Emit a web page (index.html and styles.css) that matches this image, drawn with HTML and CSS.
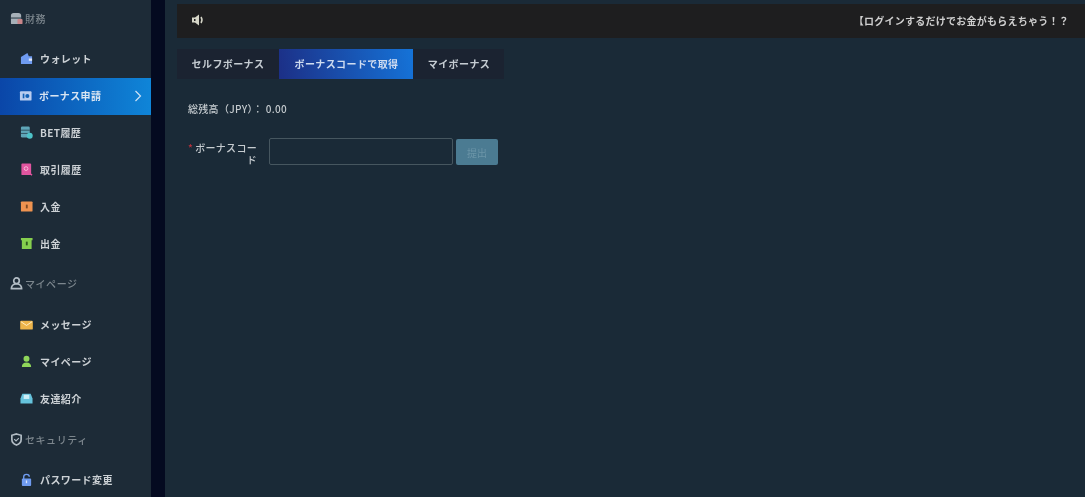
FILE: index.html
```html
<!DOCTYPE html>
<html lang="ja">
<head>
<meta charset="utf-8">
<title>ボーナス申請</title>
<link rel="stylesheet" href="styles.css">
</head>
<body>
<div class="app">
  <aside class="sidebar">
    <div class="group first">
      <svg class="gicon" viewBox="0 0 14 14"><path fill="#a6b0b8" d="M1 4q0-3 3-3h5q3 0 3 3v8q0 1-1 1H2q-1 0-1-1z"/><path fill="#1b2a36" d="M1 6h11v1H1z"/><rect x="8" y="7.500" width="5.500" height="5.500" rx="1" fill="#c9868a"/></svg>
      <span>財務</span>
    </div>
    <a class="item"><svg class="icon" viewBox="0 0 14 14"><path fill="#6f9bf0" d="M1 5.500l7-4.500 1.500 3.500H13V13H1z"/><rect x="9.500" y="7" width="3.500" height="2.500" fill="#dbe6fb"/></svg><span>ウォレット</span></a>
    <a class="item active"><svg class="icon" viewBox="0 0 14 14"><rect x="1" y="2.500" width="12.500" height="10" rx="1" fill="#b9cdf0"/><rect x="4" y="5" width="1.800" height="5" fill="#1260b5"/><circle cx="9" cy="7.500" r="2.200" fill="#1260b5"/></svg><span>ボーナス申請</span><svg class="chev" viewBox="0 0 8 12"><path d="M1.500 1l5 5-5 5" fill="none" stroke="#cfe2f6" stroke-width="1.200"/></svg></a>
    <a class="item"><svg class="icon" viewBox="0 0 14 14"><rect x="1" y="0.500" width="9.500" height="12" rx="1.500" fill="#5fa6b8"/><path d="M1 4.500h9.500M1 8h9.500" stroke="#1b2a36" stroke-width=".7"/><circle cx="10.500" cy="10.500" r="3.200" fill="#4dc3c8"/></svg><span>BET履歴</span></a>
    <a class="item"><svg class="icon" viewBox="0 0 14 14"><rect x="1.500" y="0.500" width="10.500" height="12.500" rx="1" fill="#e0559f"/><circle cx="6.500" cy="6" r="2" fill="none" stroke="#f7bfdc"/><path d="M10 11l3 2" stroke="#e0559f" stroke-width="1.500"/></svg><span>取引履歴</span></a>
    <a class="item"><svg class="icon" viewBox="0 0 14 14"><rect x="1" y="1.500" width="12.500" height="11" rx="1" fill="#ef9350"/><rect x="6.300" y="5" width="2" height="4" fill="#7f4a22"/></svg><span>入金</span></a>
    <a class="item"><svg class="icon" viewBox="0 0 14 14"><path fill="#86cf4e" d="M1 1h12.500v2.500h-1V13H2V3.500H1z"/><rect x="6.300" y="5" width="2" height="4" fill="#2f5c1e"/></svg><span>出金</span></a>
    <div class="group mypage">
      <svg class="gicon" viewBox="0 0 14 14"><circle cx="7" cy="4" r="3" fill="none" stroke="#b2bcc4" stroke-width="1.800"/><path d="M1.500 12.500q0-4 4-5h3q4 1 4 5z" fill="none" stroke="#b2bcc4" stroke-width="1.800"/></svg>
      <span>マイページ</span>
    </div>
    <a class="item"><svg class="icon" viewBox="0 0 14 14"><rect x="0.200" y="3" width="13.600" height="9.500" rx="1" fill="#edb44a"/><path d="M1 4l6 4 6-4" fill="none" stroke="#fff2cf"/></svg><span>メッセージ</span></a>
    <a class="item"><svg class="icon" viewBox="0 0 14 14"><circle cx="7" cy="4" r="3.200" fill="#8fd65a"/><path d="M2 13q0-5 5-5t5 5z" fill="#8fd65a"/></svg><span>マイページ</span></a>
    <a class="item"><svg class="icon" viewBox="0 0 14 14"><path fill="#66c3dc" d="M0.500 7l2-5h9l2 5v5.500H0.500z"/><path fill="#cdeef6" d="M4 3h6v4.500H4z"/></svg><span>友達紹介</span></a>
    <div class="group">
      <svg class="gicon" viewBox="0 0 14 14"><path d="M7 1l5 1.500V7q0 4-5 6-5-2-5-6V2.500z" fill="none" stroke="#b2bcc4" stroke-width="1.800"/><path d="M4.500 6.500l2 2 3-3" fill="none" stroke="#b2bcc4" stroke-width="1.200"/></svg>
      <span>セキュリティ</span>
    </div>
    <a class="item"><svg class="icon" viewBox="0 0 14 14"><path d="M4 7V4q0-2.500 3-2.500T10 4" fill="none" stroke="#6f9bf0" stroke-width="1.500"/><rect x="2" y="6" width="10" height="8" rx="1" fill="#6f9bf0"/><rect x="6.300" y="8" width="1.400" height="3" fill="#dbe6fb"/></svg><span>パスワード変更</span></a>
  </aside>
  <div class="strip"></div>
  <main class="main">
    <div class="notice">
      <svg class="speaker" viewBox="0 0 14 14"><path d="M1 4.500h3L8 1.500v11L4 9.500H1z" fill="#d6d6c8"/><path d="M3 6h1.500v2H3z" fill="#1e1e1f"/><path d="M10 4q2 3 0 6" fill="none" stroke="#d6d6c8" stroke-width="1.500"/></svg>
      <span class="notice-text">【ログインするだけでお金がもらえちゃう！？</span>
    </div>
    <div class="tabs">
      <a class="tab">セルフボーナス</a>
      <a class="tab current">ボーナスコードで取得</a>
      <a class="tab">マイボーナス</a>
    </div>
    <p class="balance">総残高（JPY）： 0.00</p>
    <form class="form">
      <label class="label"><i>*</i>ボーナスコード</label>
      <input class="input" type="text">
      <button class="submit" type="button">提出</button>
    </form>
  </main>
</div>
</body>
</html>
```
FILE: styles.css
```css
* { box-sizing: border-box; }
html, body { margin: 0; height: 100%; overflow: hidden; background: #1b2a36; }
body { font-family: "Noto Sans CJK JP", "Noto Sans", sans-serif; color: #d5d9dc; font-size: 10px; }
.app { display: flex; height: 497px; filter: blur(.35px); }
.sidebar { width: 151px; flex: none; background: #1d2b37; }
.strip { width: 14px; flex: none; background: #040a20; }
.group { height: 44px; display: flex; align-items: center; gap: 2px; padding: 0 0 2px 10px; color: #7c868d; font-size: 10px; font-weight: 500; letter-spacing: .55px; }
.group.first { height: 37px; padding-bottom: 0; }
.group.mypage { height: 44px; padding-bottom: 3px; }
.gicon { width: 13px; height: 13px; flex: none; }
.item { height: 37px; display: flex; align-items: center; gap: 7px; padding: 0 0 2px 20px; color: #ccd1d5; font-size: 10px; font-weight: 700; letter-spacing: .4px; }
.group.first + .item { margin-top: 4px; }
.item .icon { width: 13px; height: 13px; flex: none; }
.item.active { background: linear-gradient(90deg, #0a46a8, #0f85d8); padding-left: 19px; color: #d8e4f2; }
.item.active .chev { width: 8px; height: 12px; margin-left: auto; margin-right: 9px; }
.main { flex: 1; min-width: 0; padding: 4px 0 0 12px; background: #1a2a37; }
.notice { height: 34px; background: #1e1e1f; display: flex; align-items: center; justify-content: space-between; padding: 0 16px 2px 14px; }
.speaker { width: 14px; height: 14px; }
.notice-text { font-size: 10px; font-weight: 700; color: #d0d0d0; letter-spacing: .25px; }
.tabs { display: flex; width: 327px; height: 30px; margin-top: 11px; background: #1b2331; }
.tab { display: flex; align-items: center; justify-content: center; padding-bottom: 2px; font-size: 10px; font-weight: 700; letter-spacing: .4px; color: #c5ccd2; }
.tab:nth-child(1) { width: 102px; }
.tab:nth-child(2) { width: 134px; padding-left: 1px; }
.tab:nth-child(3) { width: 91px; padding-left: 1px; }
.tab.current { background: linear-gradient(80deg, #1c2f86, #1573d8); color: #cfdcf0; }
.balance { margin: 22px 0 0 11px; line-height: 15px; font-size: 10px; font-weight: 500; letter-spacing: .3px; color: #c5cbcf; }
.form { display: flex; align-items: flex-start; margin: 22px 0 0 10px; }
.label { width: 71px; flex: none; text-align: right; font-size: 10px; font-weight: 500; line-height: 12px; letter-spacing: .3px; padding: 4px 1px 0 0; color: #c5cbcf; }
.label i { color: #c0323c; font-style: normal; margin-right: 2px; }
.input { width: 184px; height: 27px; margin-left: 11px; background: transparent; border: 1px solid #46565f; border-radius: 2px; }
.submit { width: 42px; height: 26px; margin: 1px 0 0 3px; border: 0; border-radius: 2px; background: #4b7b92; color: #6b95a8; font: inherit; font-size: 10px; padding: 0; }
```
